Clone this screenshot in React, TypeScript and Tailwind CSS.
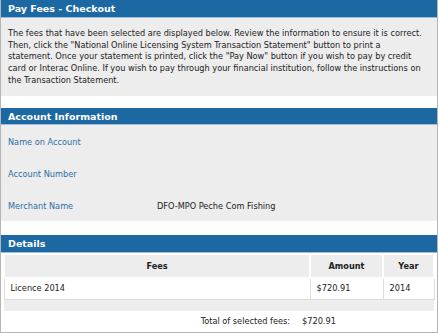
import React from "react";

const font = { fontFamily: '"DejaVu Sans", Verdana, sans-serif' };

const SectionHeader = ({ title }: { title: string }) => (
  <div className="bg-[#1c68a3] text-white font-bold text-[9.5px] h-[18px] flex items-center px-[7px] border-b border-[#9fbdd6]">
    {title}
  </div>
);

const InfoRow = ({ label, value }: { label: string; value?: string }) => (
  <div className="flex h-[32px] items-center">
    <div className="w-[149px] text-[#2e6da4]">{label}</div>
    <div className="text-[#222]">{value}</div>
  </div>
);

const App = () => {
  return (
    <div style={font} className="w-[439px] h-[333px] bg-white text-[8.2px] leading-[15px] text-[#222]">
      <div className="border-x border-[#b5b5b5] w-[438px] h-[333px] flex flex-col">
        {/* Pay Fees - Checkout */}
        <SectionHeader title="Pay Fees - Checkout" />
        <div className="bg-[#ededed] px-[7px] pt-[10px] h-[79px] leading-[11.75px] whitespace-nowrap">
          The fees that have been selected are displayed below. Review the information to ensure it is correct.
          <br />
          Then, click the "National Online Licensing System Transaction Statement" button to print a
          <br />
          statement. Once your statement is printed, click the "Pay Now" button if you wish to pay by credit
          <br />
          card or Interac Online. If you wish to pay through your financial institution, follow the instructions on
          <br />
          the Transaction Statement.
        </div>

        <div className="h-[12px]" />

        {/* Account Information */}
        <SectionHeader title="Account Information" />
        <div className="bg-[#ededed] px-[7px] pt-[1px] h-[96px]">
          <InfoRow label="Name on Account" />
          <InfoRow label="Account Number" />
          <InfoRow label="Merchant Name" value="DFO-MPO Peche Com Fishing" />
        </div>

        <div className="h-[14px]" />

        {/* Details */}
        <SectionHeader title="Details" />
        <div className="px-[2px]">
          <table className="w-full border-collapse">
            <thead>
              <tr className="bg-[#ededed] h-[24px]">
                <th className="border-2 border-white text-center font-bold">Fees</th>
                <th className="border-2 border-white text-center font-bold w-[73px]">Amount</th>
                <th className="border-2 border-white text-center font-bold w-[51px]">Year</th>
              </tr>
            </thead>
            <tbody>
              <tr className="h-[21px]">
                <td className="border border-[#dcdcdc] px-[6px]">Licence 2014</td>
                <td className="border border-[#dcdcdc] px-[6px]">$720.91</td>
                <td className="border border-[#dcdcdc] px-[6px]">2014</td>
              </tr>
              <tr className="h-[12px] bg-[#ededed]">
                <td colSpan={3} />
              </tr>
            </tbody>
          </table>
          <div className="flex h-[21px] items-center">
            <div className="w-[287px] text-right">Total of selected fees:</div>
            <div className="pl-[12px]">$720.91</div>
          </div>
        </div>
        <div className="flex-1" />
        <div className="border-b border-[#b5b5b5]" />
      </div>
    </div>
  );
};

export default App;
